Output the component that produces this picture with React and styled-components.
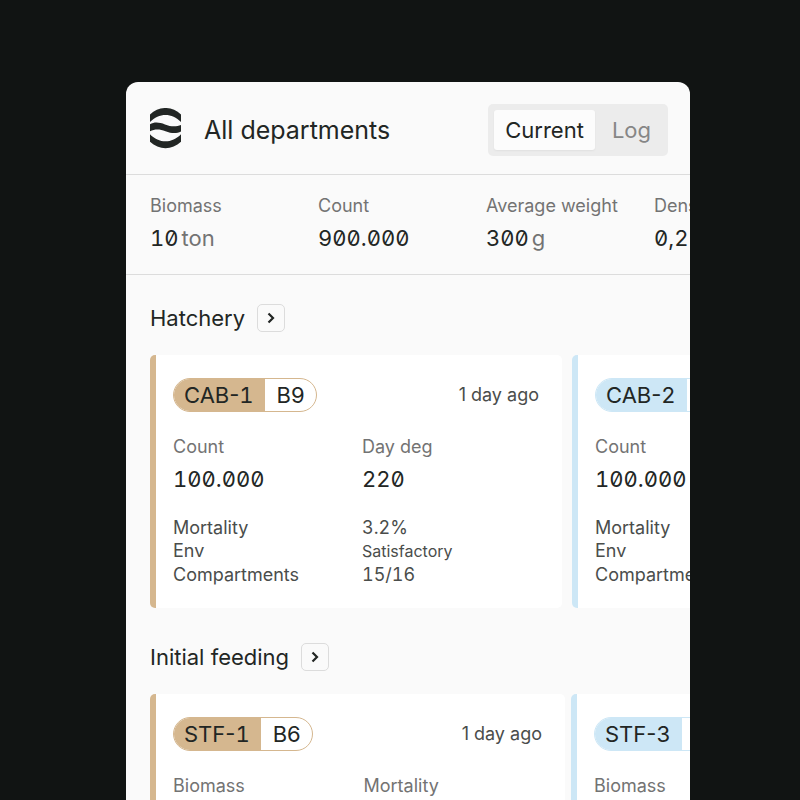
import React, { useState } from 'react';
import styled, { createGlobalStyle } from 'styled-components';

const GlobalStyle = createGlobalStyle`
  * {
    box-sizing: border-box;
  }

  body {
    margin: 0;
    background-color: #111413;
    color: #222624;
    font-family: Inter, 'Liberation Sans', sans-serif;
  }

  button {
    font-family: inherit;
  }
`;

const Page = styled.div`
  height: 100vh;
  padding: 82px 110px 0 126px;
  overflow: hidden;
`;

const Panel = styled.main`
  height: 100%;
  overflow: hidden;
  background-color: #fafafa;
  border-radius: 12px 12px 0 0;
`;

const Header = styled.header`
  display: flex;
  align-items: center;
  padding: 22px 22px 18px 24px;
  border-bottom: 1px solid #dcdcdc;
`;

const Title = styled.h1`
  flex: 1;
  margin: 0 0 0 23px;
  font-size: 25px;
  font-weight: 400;
  line-height: 32px;
`;

const Tabs = styled.div`
  display: flex;
  gap: 6px;
  padding: 6px;
  background-color: #ececec;
  border-radius: 5px;
`;

const Tab = styled.button`
  height: 40px;
  padding: 0 11px;
  border: none;
  border-radius: 3px;
  font-size: 22px;
  line-height: 28px;
  color: ${(props) => (props.$active ? '#222624' : '#868686')};
  background-color: ${(props) => (props.$active ? '#fcfcfc' : 'transparent')};
  box-shadow: ${(props) => (props.$active ? '0 1px 2px rgba(0, 0, 0, 0.05)' : 'none')};
`;

const Summary = styled.div`
  display: grid;
  grid-auto-flow: column;
  grid-auto-columns: 168px;
  padding: 19px 0 20px 24px;
  border-bottom: 1px solid #dcdcdc;
`;

const Label = styled.div`
  font-size: 18px;
  line-height: 24px;
  color: #737373;
  white-space: nowrap;
`;

const Value = styled.div`
  margin-top: 4px;
  font-size: 22px;
  line-height: 32px;
  font-feature-settings: 'zero', 'tnum';
  white-space: nowrap;
`;

const Unit = styled.span`
  margin-left: 3px;
  color: #737373;
`;

const Section = styled.section`
  padding: 29px 0 6px 24px;
`;

const SectionHeader = styled.div`
  display: flex;
  align-items: center;
  gap: 12px;
  margin-bottom: 23px;
`;

const SectionTitle = styled.h2`
  margin: 0;
  font-size: 22px;
  font-weight: 400;
  line-height: 28px;
`;

const OpenButton = styled.button`
  display: flex;
  align-items: center;
  justify-content: center;
  width: 28px;
  height: 28px;
  padding: 0;
  color: #222624;
  background-color: #fafafa;
  border: 1px solid #dcdcdc;
  border-radius: 5px;
`;

const Cards = styled.div`
  display: flex;
  gap: ${(props) => props.$gap}px;
`;

const Card = styled.article`
  flex: 0 0 ${(props) => props.$width}px;
  padding: 23px 23px 22px 17px;
  background-color: #ffffff;
  border-left: 6px solid ${(props) => props.$color};
  border-radius: 5px;
`;

const CardTop = styled.div`
  display: flex;
  align-items: center;
  justify-content: space-between;
  margin-bottom: 23px;
`;

const Tag = styled.div`
  display: flex;
  overflow: hidden;
  border: 1px solid ${(props) => props.$color};
  border-radius: 17px;
  font-size: 22px;
  line-height: 32px;
`;

const TagName = styled.span`
  padding: 0 11px 0 10px;
  background-color: ${(props) => props.$color};
`;

const TagNumber = styled.span`
  font-feature-settings: 'tnum';
`;

const TagCode = styled.span`
  padding: 0 11px 0 12px;
`;

const Time = styled.time`
  font-size: 18px;
  line-height: 24px;
  color: #4a4d4b;
`;

const Columns = styled.div`
  display: grid;
  grid-template-columns: 1fr 1fr;
  column-gap: 12px;
`;

const Details = styled(Columns)`
  margin-top: 21px;
  font-size: 18px;
  line-height: 23px;
  font-feature-settings: 'tnum';
  color: #4a4d4b;
`;

const Small = styled.span`
  font-size: 16px;
`;

const sand = '#d5b78f';
const sky = '#cde7f6';

const summary = [
  { label: 'Biomass', value: '10', unit: 'ton' },
  { label: 'Count', value: '900.000' },
  { label: 'Average weight', value: '300', unit: 'g' },
  { label: 'Density', value: '0,2' },
];

const details = [
  ['Mortality', '3.2%'],
  ['Env', <Small>Satisfactory</Small>],
  ['Compartments', '15/16'],
];

const departments = [
  {
    name: 'Hatchery',
    width: 412,
    gap: 10,
    stats: [['Count', '100.000'], ['Day deg', '220']],
    units: [
      { type: 'CAB', number: 1, code: 'B9', color: sand },
      { type: 'CAB', number: 2, code: 'B9', color: sky },
    ],
  },
  {
    name: 'Initial feeding',
    width: 415,
    gap: 6,
    stats: [['Biomass', '10'], ['Mortality', '3.2%']],
    units: [
      { type: 'STF', number: 1, code: 'B6', color: sand },
      { type: 'STF', number: 3, code: 'B6', color: sky },
    ],
  },
];

function Logo() {
  return (
    <svg width="31" height="44" viewBox="0 0 31 44" fill="#222624" aria-hidden="true">
      <path d="M0 6.5C9 -2.2 22 -2.2 31 6.5V14C22 4.500 9 4.500 0 14Z" />
      <path d="M0 16.200C4.500 13.800 9.500 14.300 15 16.500C21 18.900 26.500 18.800 31 17V23.400C26.500 25.800 21.500 25.500 15.500 23.200C9.500 20.900 4.500 21.200 0 23.200Z" />
      <path d="M0 26.200C9 35.700 22 35.700 31 26.200V33.700C22 42.300 9 42.300 0 33.700Z" />
    </svg>
  );
}

function Chevron() {
  return (
    <svg width="10" height="12" viewBox="0 0 10 12" fill="none" stroke="currentColor" strokeWidth="2.2" aria-hidden="true">
      <path d="M2.500 1.500L7 6L2.500 10.500" />
    </svg>
  );
}

function UnitCard({ unit, stats, width }) {
  return (
    <Card $color={unit.color} $width={width}>
      <CardTop>
        <Tag $color={unit.color}>
          <TagName $color={unit.color}>
            {unit.type}-<TagNumber>{unit.number}</TagNumber>
          </TagName>
          <TagCode>{unit.code}</TagCode>
        </Tag>
        <Time>1 day ago</Time>
      </CardTop>
      <Columns>
        {stats.map(([label, value]) => (
          <div key={label}>
            <Label>{label}</Label>
            <Value>{value}</Value>
          </div>
        ))}
      </Columns>
      <Details>
        {details.map(([label, value]) => (
          <React.Fragment key={label}>
            <div>{label}</div>
            <div>{value}</div>
          </React.Fragment>
        ))}
      </Details>
    </Card>
  );
}

function App() {
  const [tab, setTab] = useState('Current');

  return (
    <Page>
      <GlobalStyle />
      <Panel>
        <Header>
          <Logo />
          <Title>All departments</Title>
          <Tabs>
            {['Current', 'Log'].map((name) => (
              <Tab key={name} type="button" $active={tab === name} onClick={() => setTab(name)}>
                {name}
              </Tab>
            ))}
          </Tabs>
        </Header>

        <Summary>
          {summary.map((item) => (
            <div key={item.label}>
              <Label>{item.label}</Label>
              <Value>
                {item.value}
                {item.unit && <Unit>{item.unit}</Unit>}
              </Value>
            </div>
          ))}
        </Summary>

        {departments.map((department) => (
          <Section key={department.name}>
            <SectionHeader>
              <SectionTitle>{department.name}</SectionTitle>
              <OpenButton type="button" aria-label={`Open ${department.name}`}>
                <Chevron />
              </OpenButton>
            </SectionHeader>
            <Cards $gap={department.gap}>
              {department.units.map((unit) => (
                <UnitCard key={unit.number} unit={unit} stats={department.stats} width={department.width} />
              ))}
            </Cards>
          </Section>
        ))}
      </Panel>
    </Page>
  );
}

export default App;
